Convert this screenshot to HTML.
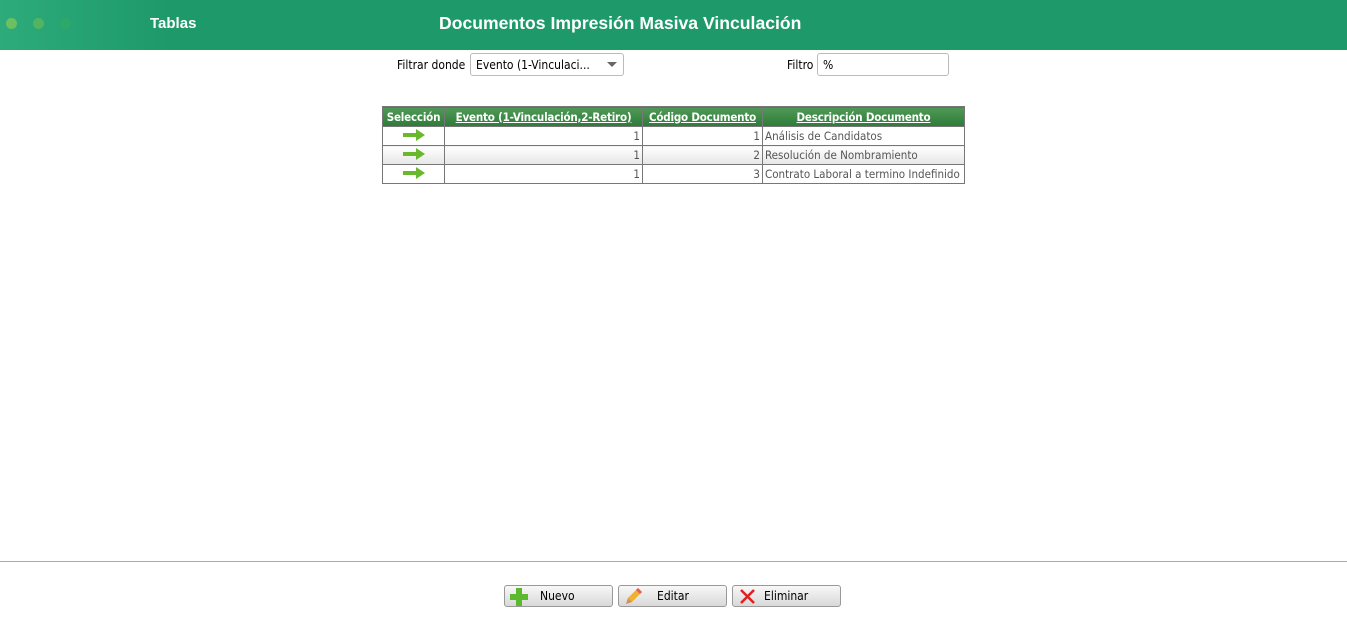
<!DOCTYPE html>
<html><head><meta charset="utf-8"><style>
body{margin:0;width:1347px;height:636px;background:#fff;font-family:"DejaVu Sans","Liberation Sans",sans-serif;position:relative;overflow:hidden}
.hdr{position:absolute;left:0;top:0;width:1347px;height:50px;background:#1e9a6a}
.glow{position:absolute;left:0;top:0;width:170px;height:50px;background:linear-gradient(90deg,#2eab7a,rgba(30,154,106,0))}
.dot{position:absolute;top:18px;width:11px;height:11px;border-radius:50%}
.t{position:absolute;color:#fff;font-weight:bold;font-family:"Liberation Sans",sans-serif}
.lbl{position:absolute;font-size:12px;color:#000;font-family:"DejaVu Sans Condensed","DejaVu Sans",sans-serif}
.box{position:absolute;border:1px solid #bbb;border-radius:3px;background:#fff;font-size:12px;font-family:"DejaVu Sans Condensed","DejaVu Sans",sans-serif;box-sizing:border-box;padding:4px 5px}
table{position:absolute;left:382px;top:106px;width:582px;table-layout:fixed;border-collapse:collapse;font-family:"DejaVu Sans Condensed","DejaVu Sans",sans-serif;font-size:11.5px}
th{background:linear-gradient(#4f9a55,#2e7a3a);color:#fff;height:19px;padding:0 1px;border:1px solid #777;white-space:nowrap;overflow:hidden;letter-spacing:-0.2px}
th a{color:#fff;text-decoration:underline}
td{border:1px solid #777;height:18px;padding:0 2px;color:#555;white-space:nowrap;overflow:hidden}
tr.alt td{background:linear-gradient(#fff,#e6e6e6)}
.r{text-align:right}
.btn{position:absolute;top:585px;width:109px;height:22px;border:1px solid #999;border-radius:3px;background:linear-gradient(#f8f8f8,#d8d8d8);box-sizing:border-box;font-family:"DejaVu Sans Condensed","DejaVu Sans",sans-serif;font-size:12px;line-height:20px}
.btn span{position:absolute;top:0}
</style></head><body>
<div class="hdr"><div class="glow"></div>
<div class="dot" style="left:6px;background:#6cc060"></div>
<div class="dot" style="left:33px;background:#52b462"></div>
<div class="dot" style="left:60px;background:#2ea868"></div>
<div class="t" style="left:150px;top:15px;font-size:15px">Tablas</div>
<div class="t" style="left:439px;top:13px;font-size:17.6px">Documentos Impresión Masiva Vinculación</div>
</div>
<div class="lbl" style="left:397px;top:58px">Filtrar donde</div>
<div class="box" style="left:470px;top:53px;width:154px;height:23px">Evento (1-Vinculaci...<span style="position:absolute;right:6px;top:8px;border:5px solid transparent;border-top:5px solid #666;border-bottom:0"></span></div>
<div class="lbl" style="left:787px;top:58px">Filtro</div>
<div class="box" style="left:817px;top:53px;width:132px;height:23px">%</div>
<table>
<colgroup><col style="width:62px"><col style="width:198px"><col style="width:120px"><col style="width:202px"></colgroup>
<tr><th>Selección</th><th><a>Evento (1-Vinculación,2-Retiro)</a></th><th><a>Código Documento</a></th><th><a>Descripción Documento</a></th></tr>
<tr><td style="text-align:center"><svg width="22" height="12"><path d="M0 4h13V0l9 6-9 6V8H0z" fill="#6ab82e"/></svg></td><td class="r">1</td><td class="r">1</td><td>Análisis de Candidatos</td></tr>
<tr class="alt"><td style="text-align:center"><svg width="22" height="12"><path d="M0 4h13V0l9 6-9 6V8H0z" fill="#6ab82e"/></svg></td><td class="r">1</td><td class="r">2</td><td>Resolución de Nombramiento</td></tr>
<tr><td style="text-align:center"><svg width="22" height="12"><path d="M0 4h13V0l9 6-9 6V8H0z" fill="#6ab82e"/></svg></td><td class="r">1</td><td class="r">3</td><td>Contrato Laboral a termino Indefinido</td></tr>
</table>
<div style="position:absolute;left:0;top:561px;width:1347px;height:1px;background:#aaa"></div>
<div class="btn" style="left:504px"><svg style="position:absolute;left:5px;top:2px" width="18" height="18"><path d="M6 0h6v6h6v6h-6v6H6v-6H0V6h6z" fill="#5cb82e"/></svg><span style="left:35px">Nuevo</span></div>
<div class="btn" style="left:618px"><svg style="position:absolute;left:5px;top:2px" width="18" height="18"><path d="M2 16l2-6L14 0l4 4L8 14z" fill="#f0b030"/><path d="M2 16l2-6 4 4z" fill="#d09060"/><path d="M14 0l4 4-2 2-4-4z" fill="#e06060"/></svg><span style="left:38px">Editar</span></div>
<div class="btn" style="left:732px"><svg style="position:absolute;left:7px;top:3px" width="15" height="15"><path d="M1 1L14 14M14 1L1 14" stroke="#e02020" stroke-width="2.5"/></svg><span style="left:31px">Eliminar</span></div>
</body></html>
